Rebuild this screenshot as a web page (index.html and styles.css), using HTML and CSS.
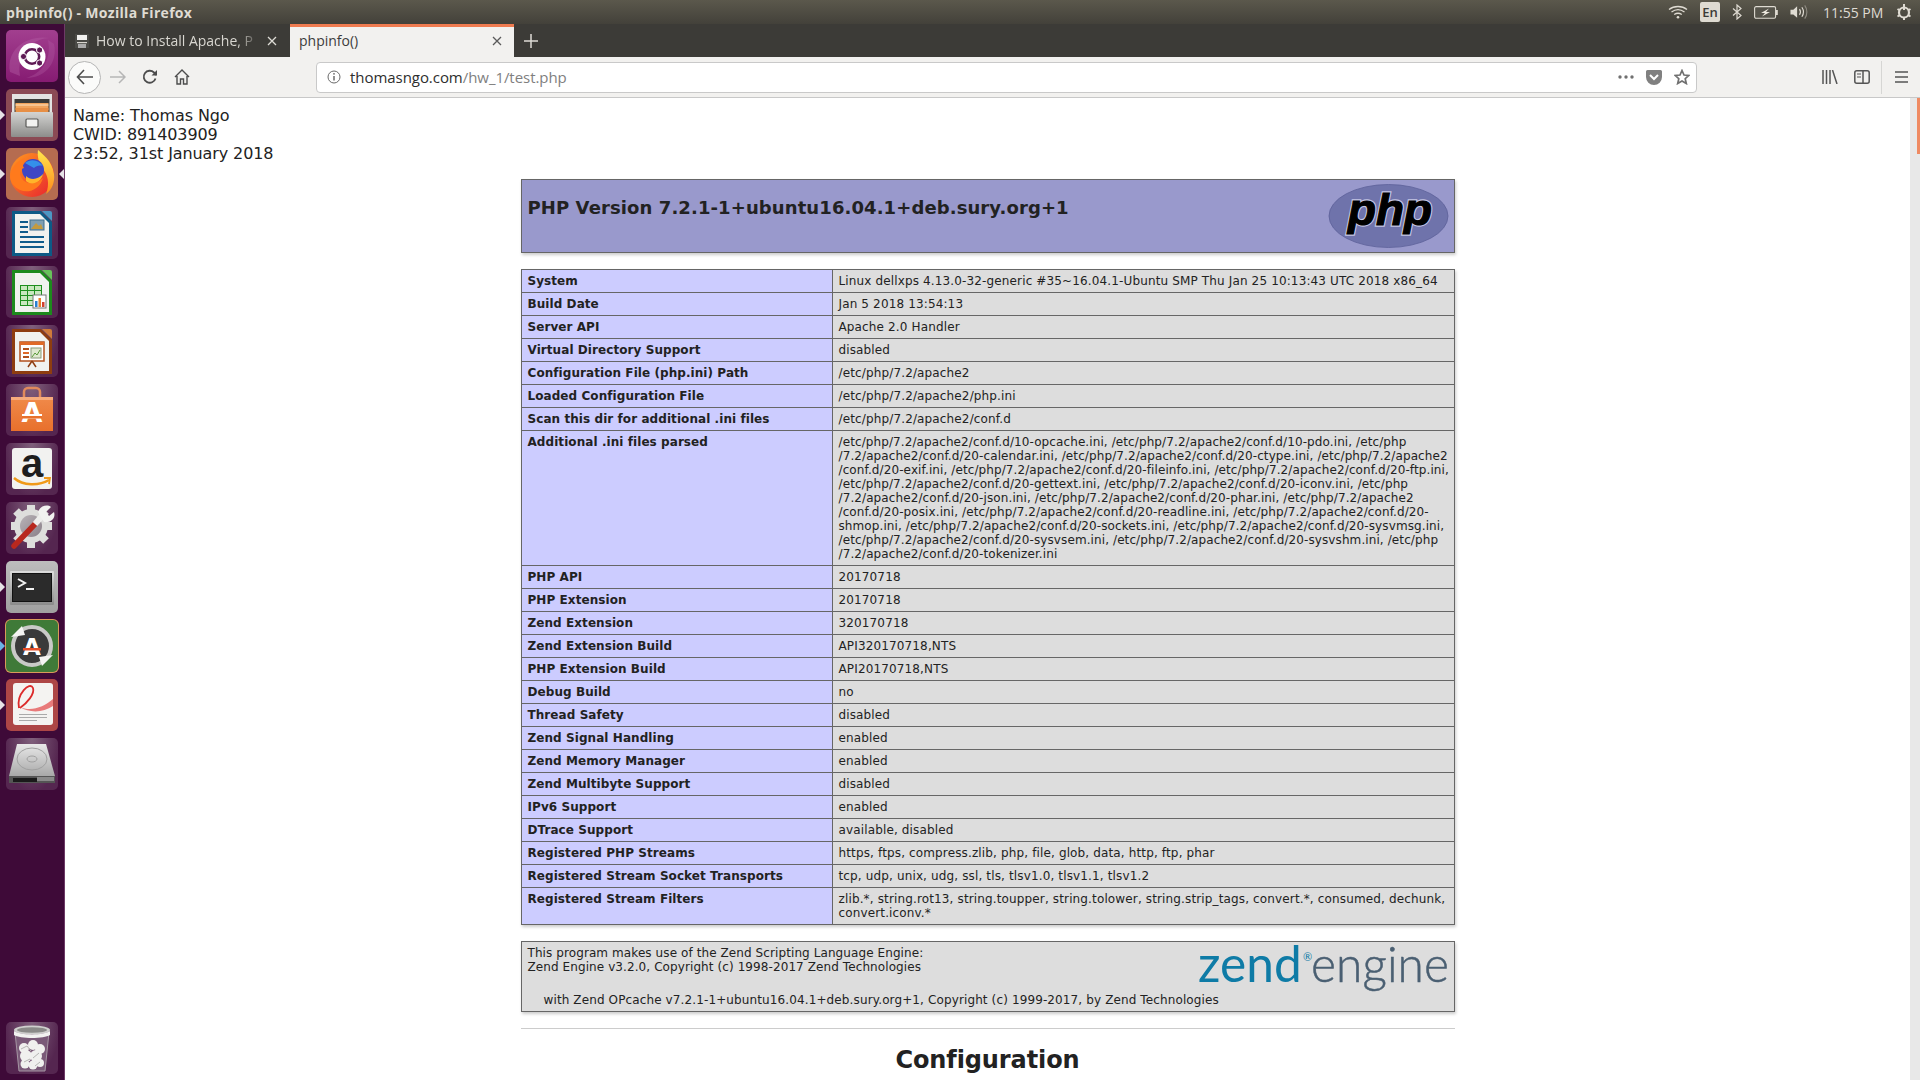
FILE: index.html
```html
<!DOCTYPE html>
<html lang="en">
  <head>
    <meta charset="UTF-8" />
    <title>phpinfo()</title>
    <link rel="stylesheet" href="styles.css">
  </head>
  <body>
    <svg class="defs" width="0" height="0">
      <defs>
        <linearGradient id="gCab" x1="0" y1="0" x2="0" y2="1"><stop offset="0" stop-color="#d4d4d2"/><stop offset="1" stop-color="#8d8d8b"/></linearGradient>
        <linearGradient id="gFox" x1="0" y1="0" x2="1" y2="1"><stop offset="0" stop-color="#ff9a1f"/><stop offset="1" stop-color="#e8202f"/></linearGradient>
        <linearGradient id="gTail" x1="0" y1="0" x2="0" y2="1"><stop offset="0" stop-color="#ffe64d"/><stop offset="1" stop-color="#ff8a1c"/></linearGradient>
        <linearGradient id="gBag" x1="0" y1="0" x2="0" y2="1"><stop offset="0" stop-color="#f08a4a"/><stop offset="1" stop-color="#e8702c"/></linearGradient>
        <linearGradient id="gDrive" x1="0" y1="0" x2="0" y2="1"><stop offset="0" stop-color="#e8e8e8"/><stop offset="1" stop-color="#a8a8a8"/></linearGradient>
        <linearGradient id="gTerm" x1="0" y1="0" x2="0" y2="1"><stop offset="0" stop-color="#dcdcdc"/><stop offset="1" stop-color="#8a8a8a"/></linearGradient>
        <linearGradient id="gHole" x1="0" y1="0" x2="1" y2="1"><stop offset="0" stop-color="#b9b4b8"/><stop offset="1" stop-color="#8a7f88"/></linearGradient>
      </defs>
    </svg>

    <header class="panel">
      <span class="panel-title">phpinfo() - Mozilla Firefox</span>
      <div class="indicators">
        <svg width="20" height="14" viewBox="0 0 20 14" fill="none" stroke="#dfdbd2" stroke-width="1.3"><path d="M1 4.5C6 0.5 14 0.5 19 4.5"/><path d="M3.5 7C7.5 4 12.5 4 16.5 7"/><path d="M6.2 9.5C8.5 8 11.5 8 13.8 9.5"/><circle cx="10" cy="12.2" r="1.3" fill="#dfdbd2" stroke="none"/></svg>
        <span class="ind-lang">En</span>
        <svg width="10" height="16" viewBox="0 0 10 16" fill="none" stroke="#dfdbd2" stroke-width="1.2"><path d="M1 4.5L9 11.5L5 15V1L9 4.5L1 11.5"/></svg>
        <svg width="24" height="13" viewBox="0 0 24 13"><rect x="0.6" y="0.6" width="21" height="11.6" rx="1.5" fill="#56544b" stroke="#dfdbd2" stroke-width="1.1"/><rect x="22" y="4" width="1.8" height="5" fill="#dfdbd2"/><path d="M15 2.5L7 7H11L8 10.5L16 6H12Z" fill="#eeeae0"/></svg>
        <svg width="19" height="16" viewBox="0 0 20 16" fill="none" stroke="#dfdbd2" stroke-width="1.2"><path d="M0.5 5.5H3.5L7.5 2V14L3.5 10.5H0.5Z" fill="#dfdbd2" stroke="none"/><path d="M10 5C11 6.5 11 9.5 10 11"/><path d="M12.5 3C14.5 6 14.5 10 12.5 13"/><path d="M15.5 1C18.5 5 18.5 11 15.5 15" stroke="#8d8a80"/></svg>
        <span class="ind-time">11:55 PM</span>
        <svg class="ind-gear" width="16" height="16" viewBox="0 0 16 16" fill="none" stroke="#dfdbd2"><circle cx="8" cy="8.5" r="5" stroke-width="2.2"/><path d="M8 0V6" stroke-width="2"/><path d="M8 13V16M1.5 5L4 6.5M14.5 5L12 6.5M1.5 12.5L4 11M14.5 12.5L12 11" stroke-width="2"/></svg>
      </div>
    </header>

    <div class="desktop">
      <nav class="launcher">
        <div class="tile tile-ubuntu">
          <svg width="52" height="52" viewBox="0 0 52 52"><path d="M4 42C0 20 20 4 44 8C30 8 10 20 14 46Z" fill="#b25ba2" opacity=".45"/><path d="M48 14C52 32 40 48 20 48C34 44 46 32 42 10Z" fill="#b25ba2" opacity=".35"/><circle cx="26" cy="26.5" r="13.5" fill="#fff"/><circle cx="26" cy="26.5" r="7.2" fill="none" stroke="#5e1a54" stroke-width="2.6"/><circle cx="33.6" cy="20" r="3.1" fill="#5e1a54" stroke="#fff"/><circle cx="33.6" cy="33" r="3.1" fill="#5e1a54" stroke="#fff"/><circle cx="17.5" cy="26.5" r="3.1" fill="#5e1a54" stroke="#fff"/></svg>
        </div>
        <div class="tile tile-files">
          <span class="pip"></span>
          <svg width="52" height="52" viewBox="0 0 52 52"><path d="M6 5H46L46 25H6Z" fill="#e3e3e1"/><rect x="8.5" y="10" width="35" height="16" fill="#3b3b38"/><rect x="9.5" y="14" width="33" height="7" fill="#f0a45c"/><rect x="9.5" y="15.5" width="33" height="1" fill="#fbe3c2"/><rect x="9.5" y="19" width="33" height="7" fill="#e78f45"/><rect x="5" y="23" width="42" height="25" rx="1" fill="url(#gCab)"/><rect x="20" y="30" width="12" height="8" rx="1" fill="#f2f2f0" stroke="#5a5a58" stroke-width="1.2"/></svg>
        </div>
        <div class="tile tile-firefox">
          <span class="pip"></span><span class="pip pip-right"></span>
          <svg width="52" height="52" viewBox="0 0 52 52"><circle cx="26" cy="27" r="22" fill="url(#gFox)"/><path d="M32 2C36 6 46 12 48 26C49 34 46 42 40 46C44 36 42 26 36 20C33 16 31 8 32 2Z" fill="url(#gTail)"/><circle cx="27" cy="22" r="11" fill="#3f46c4"/><path d="M19 15C25 10 33 12 37 18C33 17 30 18 28 20C25 18 22 17 19 15Z" fill="#3490ea"/><path d="M4 28C6 18 12 12 19 10C17 14 16 17 18 20C14 21 13 25 15 29C18 36 29 38 37 30C34 41 23 46 14 42C8 39 4 34 4 28Z" fill="#ff7a1c"/><path d="M20 28C25 33 33 31 37 26C35 35 25 38 20 33Z" fill="#ffb52a"/></svg>
        </div>
        <div class="tile tile-plum">
          <svg width="52" height="52" viewBox="0 0 52 52"><path d="M6 4H35L46 15V49H6Z" fill="#0d5a86"/><path d="M9 7H34L43 16V46H9Z" fill="#f1f2ef"/><path d="M36 4H44A2 2 0 0 1 46 6V14Z" fill="#4c97c4"/><rect x="14" y="14" width="8" height="2" fill="#0f5c8c"/><rect x="14" y="19" width="8" height="2" fill="#0f5c8c"/><rect x="14" y="24" width="8" height="2" fill="#0f5c8c"/><rect x="24" y="13" width="14" height="10" fill="#7f9eb2" stroke="#3f6f8f"/><path d="M25 22L30 16L33 19L35 17L37 22Z" fill="#c49a3e"/><rect x="14" y="29" width="24" height="2" fill="#0f5c8c"/><rect x="14" y="34" width="24" height="2" fill="#0f5c8c"/><rect x="14" y="39" width="24" height="2" fill="#0f5c8c"/></svg>
        </div>
        <div class="tile tile-plum">
          <svg width="52" height="52" viewBox="0 0 52 52"><path d="M6 4H35L46 15V49H6Z" fill="#1d8a1d"/><path d="M9 7H34L43 16V46H9Z" fill="#f1f2ef"/><path d="M36 4H44A2 2 0 0 1 46 6V14Z" fill="#67c25a"/><g fill="#c9e8bf" stroke="#1f8f1f" stroke-width="1"><rect x="14.5" y="19.5" width="7" height="5"/><rect x="21.5" y="19.5" width="7" height="5"/><rect x="28.5" y="19.5" width="7" height="5"/><rect x="14.5" y="24.5" width="7" height="5"/><rect x="21.5" y="24.5" width="7" height="5"/><rect x="28.5" y="24.5" width="7" height="5"/><rect x="14.5" y="29.5" width="7" height="5"/><rect x="21.5" y="29.5" width="7" height="5"/><rect x="14.5" y="34.5" width="7" height="5"/><rect x="21.5" y="34.5" width="7" height="5"/></g><rect x="27" y="29" width="13" height="13" fill="#fff" stroke="#777"/><rect x="29" y="35" width="2.5" height="6" fill="#2a7fd0"/><rect x="32.5" y="32" width="2.5" height="9" fill="#e8802a"/><rect x="36" y="36" width="2.5" height="5" fill="#d04030"/></svg>
        </div>
        <div class="tile tile-plum">
          <svg width="52" height="52" viewBox="0 0 52 52"><path d="M6 4H35L46 15V49H6Z" fill="#8e3d10"/><path d="M9 7H34L43 16V46H9Z" fill="#f1f2ef"/><path d="M36 4H44A2 2 0 0 1 46 6V14Z" fill="#cf7a3a"/><rect x="14" y="17" width="24" height="19" fill="#fff" stroke="#b2501c" stroke-width="1.5"/><rect x="14" y="17" width="24" height="3" fill="#e06a28"/><rect x="17" y="23" width="6" height="2" fill="#b2501c"/><rect x="17" y="27" width="6" height="2" fill="#e06a28"/><rect x="17" y="31" width="6" height="2" fill="#b2501c"/><rect x="25" y="23" width="10" height="10" fill="#dfe8cf" stroke="#8a9a7a"/><path d="M26 32L29 28L31 30L34 25" fill="none" stroke="#5a9a3a"/><path d="M26 36L22 42M26 36L30 42" stroke="#8e3d10" stroke-width="1.5"/></svg>
        </div>
        <div class="tile tile-plum">
          <svg width="52" height="52" viewBox="0 0 52 52"><path d="M18 14V8A4 4 0 0 1 22 4H30A4 4 0 0 1 34 8V14" fill="none" stroke="#e08a5c" stroke-width="2.5"/><path d="M5 13H47V47H5Z" fill="url(#gBag)"/><path d="M5 13H47V16H5Z" fill="#f6ab7c"/><text class="ic-a" x="26" y="38" text-anchor="middle" font-size="27" fill="#fff">A</text><rect x="16" y="32" width="20" height="2.5" fill="#e8702c"/><rect x="16" y="30" width="20" height="2" fill="#fff"/></svg>
        </div>
        <div class="tile tile-plum">
          <svg width="52" height="52" viewBox="0 0 52 52"><rect x="6" y="5" width="40" height="41" rx="3" fill="#f2f2f0"/><text class="ic-amazon" x="26" y="34" text-anchor="middle" font-size="40" fill="#1d1d1d">a</text><path d="M8 35C17 43 33 43 43 37" fill="none" stroke="#f09a1a" stroke-width="2.4"/><path d="M38 35L44 35L43 41" fill="none" stroke="#f09a1a" stroke-width="1.8"/></svg>
        </div>
        <div class="tile tile-plum">
          <svg width="52" height="52" viewBox="0 0 52 52"><g fill="none" stroke="#dededc"><path d="M25 3V10M25 37V46M5 24H12M38 24H46M10 9L15 14M40 9L35 14M10 39L15 34M40 39L35 34" stroke-width="8"/></g><circle cx="25" cy="24" r="17" fill="#dededc"/><circle cx="25" cy="24" r="11" fill="url(#gHole)"/><path d="M8 44L30 21" stroke="#b8281e" stroke-width="5.5" stroke-linecap="round"/><path d="M29 22L36 14" stroke="#eeeeec" stroke-width="6"/><path d="M32 10C34 4 41 2 45 5L40 10L43 14L48 10C50 16 45 21 38 20Z" fill="#f2f2f0"/></svg>
        </div>
        <div class="tile tile-term">
          <span class="pip"></span>
          <svg width="52" height="52" viewBox="0 0 52 52"><rect x="4" y="10" width="44" height="34" rx="1" fill="url(#gTerm)"/><rect x="6.5" y="12.5" width="39" height="28" fill="#2b2b2b" stroke="#111"/><path d="M12 18L19 22L12 26" fill="none" stroke="#f2f2f2" stroke-width="2"/><rect x="20" y="27" width="8" height="2" fill="#f2f2f2"/></svg>
        </div>
        <div class="tile tile-update">
          <span class="pip pip-open"></span>
          <svg width="52" height="52" viewBox="0 0 52 52"><circle cx="26" cy="26" r="19" fill="#3a3a3a" stroke="#c9c9c7" stroke-width="4"/><path d="M5 17L16 6L19 15Z" fill="#f4f4f2"/><path d="M47 35L36 46L33 37Z" fill="#f4f4f2"/><text class="ic-a" x="26" y="35" text-anchor="middle" font-size="23" fill="#fff">A</text><rect x="17" y="28" width="18" height="2.5" fill="#e8502c"/></svg>
        </div>
        <div class="tile tile-adobe">
          <span class="pip"></span>
          <svg width="52" height="52" viewBox="0 0 52 52"><rect x="7" y="4" width="40" height="42" rx="3" fill="#f4f3f1"/><path d="M13 29C10 15 24 2 27 9C29 15 21 24 14 29" fill="none" stroke="#dc2a2a" stroke-width="1.8"/><path d="M14 28C25 33 38 28 47 20V27C37 34 23 34 14 28Z" fill="#e87a7a"/><rect x="13" y="35" width="28" height="1" fill="#aaa"/><rect x="13" y="38" width="28" height="1" fill="#aaa"/><rect x="13" y="41" width="18" height="1" fill="#aaa"/></svg>
        </div>
        <div class="tile tile-plum">
          <svg width="52" height="52" viewBox="0 0 52 52"><path d="M11 6H40L49 38H3Z" fill="url(#gDrive)"/><ellipse cx="26" cy="21" rx="15" ry="11" fill="none" stroke="#a0a0a0"/><ellipse cx="26" cy="21" rx="5" ry="3" fill="none" stroke="#a0a0a0"/><rect x="3" y="38" width="46" height="7" fill="#555"/><rect x="7" y="40" width="24" height="4" fill="#1a1a1a"/><rect x="31" y="39" width="17" height="4" fill="#8a8a8a"/></svg>
        </div>
        <div class="tile tile-plum trash">
          <svg width="52" height="52" viewBox="0 0 52 52"><path d="M9 10L13 49H39L43 10Z" fill="#7a5a78" stroke="#a596a3"/><g fill="#f0f0ee"><circle cx="18" cy="26" r="5"/><circle cx="27" cy="23" r="5"/><circle cx="34" cy="27" r="5"/><circle cx="20" cy="34" r="6"/><circle cx="30" cy="34" r="6"/><circle cx="19" cy="42" r="4.5"/><circle cx="27" cy="43" r="4.5"/><circle cx="34" cy="41" r="4"/></g><path d="M15 27L21 24L25 29M27 36L33 31M18 40L24 37M29 44L34 40" fill="none" stroke="#b5b5b3"/><ellipse cx="26" cy="8" rx="18" ry="4.5" fill="#cfcfcd"/><ellipse cx="26" cy="8" rx="15" ry="2.8" fill="#8a8a88"/><path d="M8 9V13C14 17 38 17 44 13V9C38 13.5 14 13.5 8 9Z" fill="#f2f2f0"/></svg>
        </div>
      </nav>

      <main class="browser">
        <div class="tabstrip">
          <div class="tab">
            <svg class="favicon" width="14" height="14" viewBox="0 0 14 14"><path d="M0 0H14V14H0Z" fill="#4a4a46"/><rect x="2" y="1" width="10" height="5" fill="#f2f1ef"/><rect x="2" y="8" width="10" height="1.2" fill="#d8d6d0"/><rect x="3" y="10" width="8" height="4" fill="#aaa"/></svg>
            <span class="tab-label tab-fade">How to Install Apache, P</span>
            <svg class="tab-close" width="10" height="10" viewBox="0 0 10 10" stroke="#dedcd6" stroke-width="1.3"><path d="M1 1L9 9M9 1L1 9"/></svg>
          </div>
          <div class="tab tab-active">
            <span class="tab-label">phpinfo()</span>
            <svg class="tab-close" width="10" height="10" viewBox="0 0 10 10" stroke="#5a5a5a" stroke-width="1.3"><path d="M1 1L9 9M9 1L1 9"/></svg>
          </div>
          <svg class="tab-new" width="14" height="14" viewBox="0 0 14 14" stroke="#dedcd6" stroke-width="1.5"><path d="M7 0V14M0 7H14"/></svg>
        </div>

        <div class="navbar">
          <div class="nav-back">
            <svg width="18" height="16" viewBox="0 0 18 16" fill="none" stroke="#4c4c4c" stroke-width="1.6"><path d="M8 1L1.5 8L8 15M1.5 8H17"/></svg>
          </div>
          <svg class="nav-forward" width="16" height="14" viewBox="0 0 16 14" fill="none" stroke="#b6b6b6" stroke-width="1.5"><path d="M9 1L15 7L9 13M15 7H0"/></svg>
          <svg class="nav-reload" width="16" height="16" viewBox="0 0 16 16" fill="none" stroke="#4c4c4c" stroke-width="1.8"><path d="M13.5 9.5A6 6 0 1 1 12 3.5L14.5 6"/><path d="M15 1V6.5H9.5" fill="#4c4c4c" stroke="none"/></svg>
          <svg class="nav-home" width="16" height="16" viewBox="0 0 16 16" fill="none" stroke="#4c4c4c" stroke-width="1.4"><path d="M1 8L8 1L15 8M3 7V15H6.5V10H9.5V15H13V7"/></svg>
          <div class="urlbar">
            <svg class="url-info" width="14" height="14" viewBox="0 0 14 14" fill="none" stroke="#6a6a6a"><circle cx="7" cy="7" r="6"/><path d="M7 6V10.5" stroke-width="1.5"/><circle cx="7" cy="3.8" r=".9" fill="#6a6a6a" stroke="none"/></svg>
            <span class="url-text">thomasngo.com<span class="url-path">/hw_1/test.php</span></span>
            <svg class="url-dots" width="16" height="4" viewBox="0 0 16 4" fill="#707070"><circle cx="2" cy="2" r="1.7"/><circle cx="8" cy="2" r="1.7"/><circle cx="14" cy="2" r="1.7"/></svg>
            <svg class="url-pocket" width="16" height="15" viewBox="0 0 16 15"><path d="M1.5 0H14.5A1.5 1.5 0 0 1 16 1.5V7A8 8 0 0 1 0 7V1.5A1.5 1.5 0 0 1 1.5 0Z" fill="#808080"/><path d="M4 5L8 9L12 5" fill="none" stroke="#fff" stroke-width="2"/></svg>
            <svg class="url-star" width="16" height="16" viewBox="0 0 16 16" fill="none" stroke="#707070" stroke-width="1.7"><path d="M8 1.5L10 6L14.8 6.4L11.2 9.7L12.3 14.5L8 12L3.7 14.5L4.8 9.7L1.2 6.4L6 6Z"/></svg>
          </div>
          <svg class="tool-library" width="16" height="14" viewBox="0 0 16 14" stroke="#555" stroke-width="1.5"><path d="M1 0V14M4.5 0V14M8 0V14M10.5 0L15 14"/></svg>
          <svg class="tool-sidebar" width="16" height="14" viewBox="0 0 16 14" fill="none" stroke="#555" stroke-width="1.5"><rect x=".8" y=".8" width="14.4" height="12.4" rx="2"/><path d="M9 1V13"/><path d="M3 4H7M3 7H7" stroke-width="1.2"/></svg>
          <span class="nav-divider"></span>
          <svg class="tool-menu" width="13" height="12" viewBox="0 0 13 12" stroke="#555" stroke-width="1.6"><path d="M0 1H13M0 6H13M0 11H13"/></svg>
        </div>

        <div class="viewport">
          <div class="page">
            <div class="intro">Name: Thomas Ngo<br>CWID: 891403909<br>23:52, 31st January 2018</div>
            <div class="center">
              <table class="info title-table">
                <tr class="h">
                  <td>
                    <svg class="php-logo" width="120" height="64" viewBox="0 0 120 64">
                      <ellipse cx="59.5" cy="32" rx="59.5" ry="31.5" fill="#6f73ab" stroke="#5d6199" stroke-width=".8"/>
                      <g class="php-halo"><text id="phpWord" class="php-word" x="19" y="41" textLength="84" lengthAdjust="spacingAndGlyphs">php</text></g>
                      <g class="php-core"><use href="#phpWord"/></g>
                    </svg>
                    <h1 class="version">PHP Version 7.2.1-1+ubuntu16.04.1+deb.sury.org+1</h1>
                  </td>
                </tr>
              </table>

              <table class="info">
                <tr><td class="e">System</td><td class="v">Linux dellxps 4.13.0-32-generic #35~16.04.1-Ubuntu SMP Thu Jan 25 10:13:43 UTC 2018 x86_64</td></tr>
                <tr><td class="e">Build Date</td><td class="v">Jan 5 2018 13:54:13</td></tr>
                <tr><td class="e">Server API</td><td class="v">Apache 2.0 Handler</td></tr>
                <tr><td class="e">Virtual Directory Support</td><td class="v">disabled</td></tr>
                <tr><td class="e">Configuration File (php.ini) Path</td><td class="v">/etc/php/7.2/apache2</td></tr>
                <tr><td class="e">Loaded Configuration File</td><td class="v">/etc/php/7.2/apache2/php.ini</td></tr>
                <tr><td class="e">Scan this dir for additional .ini files</td><td class="v">/etc/php/7.2/apache2/conf.d</td></tr>
                <tr><td class="e">Additional .ini files parsed</td><td class="v nowrap">/etc/php/7.2/apache2/conf.d/10-opcache.ini, /etc/php/7.2/apache2/conf.d/10-pdo.ini, /etc/php<br>/7.2/apache2/conf.d/20-calendar.ini, /etc/php/7.2/apache2/conf.d/20-ctype.ini, /etc/php/7.2/apache2<br>/conf.d/20-exif.ini, /etc/php/7.2/apache2/conf.d/20-fileinfo.ini, /etc/php/7.2/apache2/conf.d/20-ftp.ini,<br>/etc/php/7.2/apache2/conf.d/20-gettext.ini, /etc/php/7.2/apache2/conf.d/20-iconv.ini, /etc/php<br>/7.2/apache2/conf.d/20-json.ini, /etc/php/7.2/apache2/conf.d/20-phar.ini, /etc/php/7.2/apache2<br>/conf.d/20-posix.ini, /etc/php/7.2/apache2/conf.d/20-readline.ini, /etc/php/7.2/apache2/conf.d/20-<br>shmop.ini, /etc/php/7.2/apache2/conf.d/20-sockets.ini, /etc/php/7.2/apache2/conf.d/20-sysvmsg.ini,<br>/etc/php/7.2/apache2/conf.d/20-sysvsem.ini, /etc/php/7.2/apache2/conf.d/20-sysvshm.ini, /etc/php<br>/7.2/apache2/conf.d/20-tokenizer.ini</td></tr>
                <tr><td class="e">PHP API</td><td class="v">20170718</td></tr>
                <tr><td class="e">PHP Extension</td><td class="v">20170718</td></tr>
                <tr><td class="e">Zend Extension</td><td class="v">320170718</td></tr>
                <tr><td class="e">Zend Extension Build</td><td class="v">API320170718,NTS</td></tr>
                <tr><td class="e">PHP Extension Build</td><td class="v">API20170718,NTS</td></tr>
                <tr><td class="e">Debug Build</td><td class="v">no</td></tr>
                <tr><td class="e">Thread Safety</td><td class="v">disabled</td></tr>
                <tr><td class="e">Zend Signal Handling</td><td class="v">enabled</td></tr>
                <tr><td class="e">Zend Memory Manager</td><td class="v">enabled</td></tr>
                <tr><td class="e">Zend Multibyte Support</td><td class="v">disabled</td></tr>
                <tr><td class="e">IPv6 Support</td><td class="v">enabled</td></tr>
                <tr><td class="e">DTrace Support</td><td class="v">available, disabled</td></tr>
                <tr><td class="e">Registered PHP Streams</td><td class="v">https, ftps, compress.zlib, php, file, glob, data, http, ftp, phar</td></tr>
                <tr><td class="e">Registered Stream Socket Transports</td><td class="v">tcp, udp, unix, udg, ssl, tls, tlsv1.0, tlsv1.1, tlsv1.2</td></tr>
                <tr><td class="e">Registered Stream Filters</td><td class="v">zlib.*, string.rot13, string.toupper, string.tolower, string.strip_tags, convert.*, consumed, dechunk, convert.iconv.*</td></tr>
              </table>

              <table class="info">
                <tr>
                  <td class="v zend-cell">
                    <svg class="zend-logo" width="250" height="46" viewBox="0 0 250 46">
                      <text class="zend-word" x="-1" y="36" textLength="104" lengthAdjust="spacingAndGlyphs">zend</text>
                      <text class="zend-reg" x="104" y="15">®</text>
                      <text class="engine-word" x="112" y="36" textLength="138" lengthAdjust="spacingAndGlyphs">engine</text>
                    </svg>
                    This program makes use of the Zend Scripting Language Engine:<br>Zend Engine v3.2.0, Copyright (c) 1998-2017 Zend Technologies
                    <div class="opcache">with Zend OPcache v7.2.1-1+ubuntu16.04.1+deb.sury.org+1, Copyright (c) 1999-2017, by Zend Technologies</div>
                  </td>
                </tr>
              </table>

              <hr class="rule">
              <h1 class="section">Configuration</h1>
            </div>
          </div>
          <div class="scrollbar"><span class="thumb"></span></div>
        </div>
      </main>
    </div>
  </body>
</html>
```

FILE: styles.css
```css
html,
body {
  margin: 0;
  height: 1080px;
  overflow: hidden;
}
body {
  font-family: "DejaVu Sans", sans-serif;
  color: #222;
  background: #fff;
}
.defs {
  position: absolute;
}

/* top panel */
.panel {
  display: flex;
  align-items: center;
  justify-content: space-between;
  height: 24px;
  background: linear-gradient(#5b584c, #43413a);
  color: #dfdbd2;
  font-family: "Open Sans", sans-serif;
}
.panel-title {
  padding-left: 6px;
  font-size: 14px;
  font-weight: 700;
  letter-spacing: 0.3px;
}
.indicators {
  display: flex;
  align-items: center;
  gap: 12px;
  padding-right: 8px;
}
.ind-lang {
  width: 20px;
  height: 20px;
  border-radius: 2px;
  background: #dfdbd2;
  color: #3c3b37;
  font-size: 13px;
  font-weight: 600;
  line-height: 20px;
  text-align: center;
}
.ind-time {
  width: 60px;
  margin: 0 1px 0 2px;
  font-size: 14px;
  white-space: nowrap;
}

.desktop {
  display: flex;
  height: 1056px;
}

/* launcher */
.launcher {
  display: flex;
  flex-direction: column;
  flex: none;
  gap: 7px;
  box-sizing: border-box;
  width: 65px;
  padding: 6px 0 6px 6px;
  background: #3e0a38;
  border-right: 1px solid #6d3a66;
}
.tile {
  position: relative;
  flex: none;
  width: 52px;
  height: 52px;
  border-radius: 5px;
}
.tile svg {
  display: block;
  overflow: visible;
}
.tile-plum {
  background: radial-gradient(ellipse at 50% 0, #80607c, #552650 75%);
}
.tile-ubuntu {
  background: linear-gradient(#a23f8f, #861b72);
}
.tile-files {
  background: #8b4a54;
}
.tile-firefox {
  background: #b56c50;
}
.tile-term {
  background: linear-gradient(#bdbdbd, #a0a0a0);
}
.tile-update {
  background: #3f7a38;
  box-shadow: 0 0 0 1px #d99a5a;
}
.tile-adobe {
  background: #ad4646;
}
.trash {
  margin-top: auto;
}
.ic-a {
  font-family: "DejaVu Sans", sans-serif;
  font-weight: 700;
}
.ic-amazon {
  font-family: "Liberation Sans", sans-serif;
  font-weight: 700;
}
.pip {
  position: absolute;
  top: 21px;
  left: -6px;
  border: 5px solid transparent;
  border-left-color: #e6e2e6;
  border-right-width: 0;
}
.pip-right {
  left: auto;
  right: -6px;
  border-left-width: 0;
  border-right-width: 5px;
  border-left-color: transparent;
  border-right-color: #e6e2e6;
}
.pip-open {
  border-left-color: #6ab4e8;
}

/* browser chrome */
.browser {
  display: flex;
  flex-direction: column;
  flex: 1;
  min-width: 0;
}
.tabstrip {
  display: flex;
  align-items: stretch;
  flex: none;
  height: 33px;
  background: #3c3b37;
  font-family: "Open Sans", sans-serif;
  font-size: 14px;
}
.tab {
  display: flex;
  align-items: center;
  box-sizing: border-box;
  width: 225px;
  padding: 0 13px 0 10px;
  color: #d8d6d0;
}
.tab-active {
  width: 224px;
  padding: 0 12px 3px 9px;
  border-top: 3px solid #ef7b50;
  background: #f2f1ef;
  color: #3c3c3c;
}
.favicon {
  flex: none;
  margin-right: 7px;
}
.tab-label {
  flex: 1;
  overflow: hidden;
  white-space: nowrap;
}
.tab-fade {
  -webkit-mask-image: linear-gradient(to right, #000 85%, transparent);
  mask-image: linear-gradient(to right, #000 85%, transparent);
}
.tab-close {
  flex: none;
  margin-left: 6px;
}
.tab-new {
  align-self: center;
  margin-left: 10px;
}
.navbar {
  display: flex;
  align-items: center;
  flex: none;
  height: 40px;
  border-bottom: 1px solid #c8c8c8;
  background: #f2f1ef;
}
.navbar > * {
  flex: none;
}
.nav-back {
  display: flex;
  align-items: center;
  justify-content: center;
  box-sizing: border-box;
  width: 33px;
  height: 33px;
  margin-left: 3px;
  border: 1px solid #b5b5b5;
  border-radius: 50%;
  background: #fbfbfa;
}
.nav-forward {
  margin-left: 9px;
}
.nav-reload {
  margin-left: 16px;
}
.nav-home {
  margin-left: 16px;
}
.urlbar {
  display: flex;
  align-items: center;
  box-sizing: border-box;
  width: 1381px;
  height: 31px;
  margin-left: 126px;
  padding: 0 6px 0 10px;
  border: 1px solid #c9c9c9;
  border-radius: 4px;
  background: #fff;
  font-family: "Open Sans", sans-serif;
  font-size: 15px;
}
.url-text {
  flex: 1;
  margin-left: 9px;
  letter-spacing: -0.05px;
  color: #2e2e2e;
}
.url-path {
  color: #7f7f7f;
}
.url-pocket {
  margin-left: 12px;
}
.url-star {
  margin-left: 12px;
}
.tool-library {
  margin-left: 125px;
}
.tool-sidebar {
  margin-left: 16px;
}
.nav-divider {
  width: 1px;
  height: 33px;
  margin-left: 11px;
  background: #d6d6d4;
}
.tool-menu {
  margin-left: 13px;
}

/* page */
.viewport {
  display: flex;
  flex: 1;
  min-height: 0;
}
.page {
  flex: 1;
  min-width: 0;
  padding: 8px;
  overflow: hidden;
}
.intro {
  font-size: 16px;
  letter-spacing: -0.1px;
}
.scrollbar {
  display: flex;
  justify-content: flex-end;
  flex: none;
  align-items: flex-start;
  width: 10px;
  background: #e8e8e8;
}
.thumb {
  width: 3px;
  height: 56px;
  background: #ef8a62;
}
.center {
  font-size: 12px;
}
table.info {
  width: 934px;
  margin: 16px auto;
  table-layout: fixed;
  border-collapse: collapse;
  border: 0;
  box-shadow: 1px 2px 3px #ccc;
  font-size: 12px;
}
table.info td {
  padding: 4px 5px 4px 6px;
  border: 1px solid #666;
  vertical-align: baseline;
}
.title-table td {
  height: 64px;
  background: #99c;
}
.e {
  width: 299px;
  background: #ccf;
  font-weight: 700;
  letter-spacing: 0.07px;
}
.v {
  background: #ddd;
  letter-spacing: 0.14px;
}
.nowrap {
  white-space: nowrap;
  letter-spacing: 0.1px;
}
.zend-cell {
  letter-spacing: 0.09px;
}
.version {
  margin: 13px 0 11px;
  font-size: 18px;
  letter-spacing: 0.1px;
  text-align: left;
}
.php-logo {
  float: right;
  overflow: visible;
}
.php-word {
  font-family: "Liberation Sans", sans-serif;
  font-size: 44px;
  font-style: italic;
  font-weight: 700;
  fill: #000;
}
.php-halo {
  stroke: #c5c7e4;
  stroke-width: 3.4px;
}
.php-core {
  stroke: #000;
  stroke-width: 1.2px;
}
.zend-logo {
  float: right;
  overflow: visible;
}
.zend-word {
  font-family: "Lato", sans-serif;
  font-size: 50px;
  fill: #0e7ba6;
}
.zend-reg {
  font-family: "Lato", sans-serif;
  font-size: 11px;
  fill: #0e7ba6;
}
.engine-word {
  font-family: "Lato", sans-serif;
  font-size: 50px;
  font-weight: 300;
  fill: #4a5f72;
  stroke: #4a5f72;
  stroke-width: 0.5px;
}
.opcache {
  margin-top: 19px;
  padding-left: 16px;
  letter-spacing: 0.12px;
}
.rule {
  width: 934px;
  height: 1px;
  margin: 0 auto;
  border: 0;
  background: #ccc;
}
.section {
  margin: 17px 0 16px;
  font-size: 24px;
  letter-spacing: -0.1px;
  text-align: center;
}
```
